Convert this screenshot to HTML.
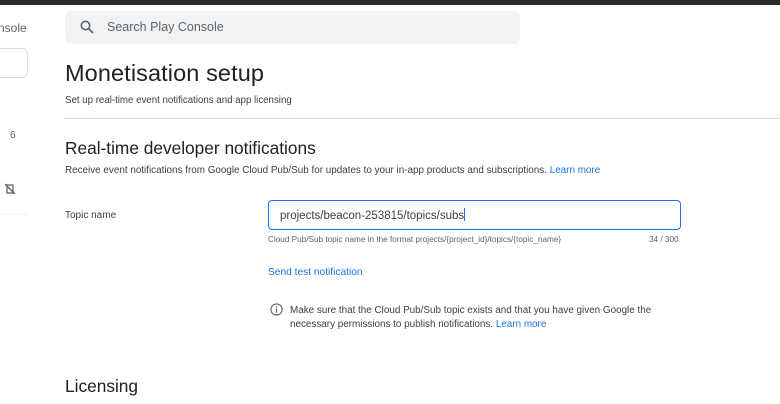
<!DOCTYPE html>
<html><head><meta charset="utf-8"><style>
*{margin:0;padding:0;box-sizing:border-box}
body{width:780px;height:404px;overflow:hidden;background:#fff;font-family:"Liberation Sans",Arial,sans-serif;color:#202124;position:relative}
.a{position:absolute;white-space:nowrap}
</style></head><body>
<div class="a" style="left:0;top:0;width:780px;height:5px;background:#2b2b2b"></div>
<div class="a" style="left:-2px;top:21px;font-size:12px;color:#5f6368">nsole</div>
<div class="a" style="left:-10px;top:48px;width:38px;height:30px;border:1px solid #dadce0;border-radius:6px"></div>
<div class="a" style="left:10px;top:130px;font-size:10px;color:#5f6368">6</div>
<svg class="a" style="left:4px;top:183px" width="12" height="12" viewBox="0 0 12 12"><rect x="3" y="2" width="6" height="8" fill="none" stroke="#5f6368" stroke-width="1.3"/><line x1="1" y1="1" x2="11" y2="11" stroke="#5f6368" stroke-width="1.3"/></svg>
<div class="a" style="left:0;top:214px;width:27px;height:1px;background:#eeeff1"></div>

<div class="a" style="left:65px;top:11px;width:455px;height:33px;background:#f1f3f4;border-radius:6px"></div>
<svg class="a" style="left:80px;top:20px" width="14" height="14" viewBox="0 0 14 14"><circle cx="5.5" cy="5.5" r="4.2" fill="none" stroke="#5f6368" stroke-width="1.6"/><line x1="8.5" y1="8.5" x2="13" y2="13" stroke="#5f6368" stroke-width="1.8"/></svg>
<div class="a" style="left:107px;top:20px;font-size:12.5px;color:#5f6368">Search Play Console</div>

<div class="a" style="left:65px;top:60px;font-size:23.5px;color:#202124;letter-spacing:0.1px">Monetisation setup</div>
<div class="a" style="left:65px;top:95px;font-size:9.7px;color:#3c4043">Set up real-time event notifications and app licensing</div>
<div class="a" style="left:65px;top:118px;width:715px;height:1px;background:#dadce0"></div>

<div class="a" style="left:65px;top:138px;font-size:17.3px">Real-time developer notifications</div>
<div class="a" style="left:65px;top:165px;font-size:9.9px;color:#3c4043">Receive event notifications from Google Cloud Pub/Sub for updates to your in-app products and subscriptions. <span style="color:#1a73e8">Learn more</span></div>

<div class="a" style="left:65px;top:210px;font-size:10px;color:#3c4043">Topic name</div>
<div class="a" style="left:268px;top:200px;width:413px;height:30px;border:1.5px solid #1a73e8;border-radius:4px"></div>
<div class="a" style="left:280px;top:208px;font-size:11.5px;color:#3c4043">projects/beacon-253815/topics/subs<span style="display:inline-block;width:1px;height:13px;background:#1a73e8;vertical-align:-2px"></span></div>
<div class="a" style="left:268px;top:235px;font-size:8.2px;color:#5f6368">Cloud Pub/Sub topic name in the format projects/{project_id}/topics/{topic_name}</div>
<div class="a" style="left:649px;top:235px;font-size:8.2px;color:#5f6368">34 / 300</div>

<div class="a" style="left:268px;top:267px;font-size:10.2px;color:#1a73e8">Send test notification</div>

<svg class="a" style="left:270px;top:303px" width="13" height="13" viewBox="0 0 13 13"><circle cx="6.5" cy="6.5" r="5.6" fill="none" stroke="#5f6368" stroke-width="1.1"/><rect x="5.9" y="5.5" width="1.2" height="4.2" fill="#5f6368"/><rect x="5.9" y="3.2" width="1.2" height="1.3" fill="#5f6368"/></svg>
<div class="a" style="left:290px;top:304px;font-size:9.9px;color:#3c4043;line-height:14px">Make sure that the Cloud Pub/Sub topic exists and that you have given Google the<br>necessary permissions to publish notifications. <span style="color:#1a73e8">Learn more</span></div>

<div class="a" style="left:65px;top:376px;font-size:17.3px">Licensing</div>
</body></html>
